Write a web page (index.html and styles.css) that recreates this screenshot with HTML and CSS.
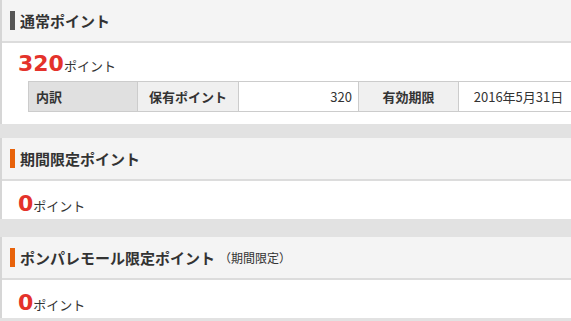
FILE: index.html
```html
<!DOCTYPE html>
<html lang="ja">
<head>
    <meta charset="UTF-8">
    <meta name="viewport" content="width=device-width, initial-scale=1.0">
    <title>ポイント</title>
    <link rel="stylesheet" href="styles.css">
</head>
<body>
    <div class="section">
        <h2 class="section-title normal">通常ポイント</h2>
        <div class="section-body">
            <p class="points"><span class="num">320</span>ポイント</p>
            <table class="detail">
                <tr>
                    <th class="label">内訳</th>
                    <th>保有ポイント</th>
                    <td class="value">320</td>
                    <th>有効期限</th>
                    <td class="date">2016年5月31日</td>
                </tr>
            </table>
        </div>
    </div>

    <div class="section compact">
        <h2 class="section-title limited">期間限定ポイント</h2>
        <div class="section-body short">
            <p class="points"><span class="num">0</span>ポイント</p>
        </div>
    </div>

    <div class="section compact">
        <h2 class="section-title limited">ポンパレモール限定ポイント<span class="note">（期間限定）</span></h2>
        <div class="section-body short">
            <p class="points"><span class="num">0</span>ポイント</p>
        </div>
    </div>
</body>
</html>
```

FILE: styles.css
```css
body {
    font-family: "Noto Sans CJK JP", sans-serif;
    background-color: #e2e2e2;
    color: #333;
    margin: 0;
    overflow: hidden;
}
.section {
    border-left: 2px solid #d6d6d6;
    margin-bottom: 14px;
    overflow: hidden;
}
.section.compact {
    margin-bottom: 18px;
}
.section-title {
    margin: 0;
    height: 41px;
    display: flex;
    align-items: center;
    padding-left: 8px;
    font-size: 15px;
    font-weight: bold;
    color: #333;
    background: #f4f4f4;
    border-bottom: 2px solid #dcdcdc;
}
.section-title::before {
    content: "";
    width: 5px;
    height: 19px;
    margin-right: 5px;
    background: #555;
}
.section-title.limited::before {
    background: #e8620a;
}
.note {
    font-size: 12px;
    font-weight: normal;
    margin-left: 4px;
}
.section-body {
    background: #fff;
    padding: 4px 0 12px 16px;
    height: 65px;
}
.section-body.short {
    padding: 6px 0 0 16px;
    height: 32px;
}
.points {
    margin: 0;
    height: 34px;
    display: flex;
    align-items: baseline;
    font-size: 13px;
    line-height: 34px;
}
.num {
    font-family: "DejaVu Sans", sans-serif;
    font-size: 22px;
    font-weight: bold;
    color: #e4322b;
}
.detail {
    margin-left: 10px;
    width: 551px;
    border-collapse: collapse;
    font-size: 13px;
}
.detail th, .detail td {
    height: 29px;
    padding: 0;
    border: 1px solid #cccccc;
}
.detail th {
    background: #f0f0f0;
    text-align: center;
}
.detail th.label {
    background: #e0e0e0;
    text-align: left;
    padding-left: 7px;
    width: 101px;
}
.detail th:nth-child(2) {
    width: 100px;
}
.detail td.value {
    width: 113px;
    text-align: right;
    padding-right: 6px;
    background: #fff;
}
.detail th:nth-child(4) {
    width: 99px;
}
.detail td.date {
    text-align: center;
    background: #fff;
}
```
